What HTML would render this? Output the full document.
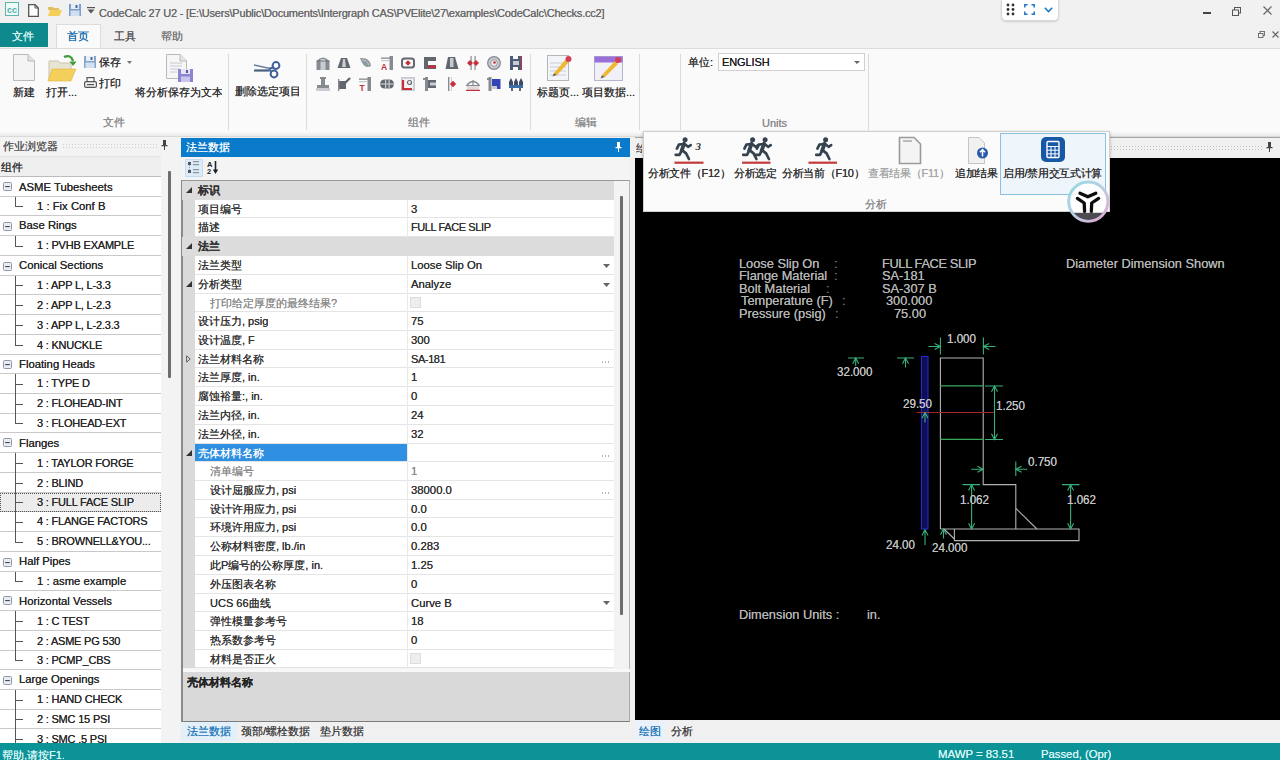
<!DOCTYPE html>
<html lang="zh"><head><meta charset="utf-8"><title>CodeCalc 27 U2</title>
<style>
*{box-sizing:border-box;margin:0;padding:0}
html,body{width:1280px;height:760px;overflow:hidden;background:#f0f0f0}
body{font-family:"Liberation Sans",sans-serif;font-size:11px;color:#333;position:relative}
.a{position:absolute;white-space:nowrap}
.t{position:absolute;white-space:nowrap;line-height:14px;height:14px;text-shadow:0 0 .6px}
svg{position:absolute;overflow:visible}
#title{left:0;top:0;width:1280px;height:24px;background:#f1f1f1}
#tabs{left:0;top:23px;width:1280px;height:25px;background:#f0f0f0}
#ribbon{left:0;top:48px;width:1280px;height:88px;background:linear-gradient(#fafafa 0,#fafafa 83px,#e4e4e4 88px);border-top:1px solid #dcdcdc}
.sep{position:absolute;width:1px;background:#dadada;top:54px;height:76px}
.glabel{color:#8a8a8a;font-size:11px}
#status{left:0;top:743px;width:1280px;height:17px;background:#0c9397;color:#fff}
.row{position:absolute;left:0;width:161px;height:20px;background:#fff;border-bottom:1px solid #c9c9c9}
.grow{position:absolute;left:195px;width:419px;height:19px;background:#fff;border-bottom:1px solid #e4e4e4}
.gcat{position:absolute;left:182px;width:432px;height:19px;background:#dcdcdc}
</style></head><body>
<!-- title bar -->
<div class="a" id="title"></div>
<div class="t" style="left:99px;top:6px;font-size:11px;color:#6a6a6a;letter-spacing:-0.2px">CodeCalc 27 U2 - [E:\Users\Public\Documents\Intergraph CAS\PVElite\27\examples\CodeCalc\Checks.cc2]</div>
<!-- tabs row -->
<div class="a" id="tabs"></div>
<div class="a" style="left:0;top:23px;width:48px;height:24px;background:#0e8a8c"></div>
<div class="t" style="left:12px;top:29px;color:#d8f4f4;font-size:11px;width:24px;overflow:hidden">文件</div>
<div class="a" style="left:56px;top:24px;width:45px;height:25px;background:#fafafa;border:1px solid #dcdcdc;border-bottom:none"></div>
<div class="t" style="left:67px;top:29px;color:#1a6fb0;font-size:11px;width:24px;overflow:hidden">首页</div>
<div class="t" style="left:114px;top:29px;color:#555;font-size:11px;width:24px;overflow:hidden">工具</div>
<div class="t" style="left:161px;top:29px;color:#777;font-size:11px;width:24px;overflow:hidden">帮助</div>
<!-- ribbon -->
<div class="a" id="ribbon"></div>
<div class="sep" style="left:228px"></div><div class="sep" style="left:306px"></div><div class="sep" style="left:530px"></div><div class="sep" style="left:639px"></div><div class="sep" style="left:680px"></div><div class="sep" style="left:868px"></div>
<!-- quick access icons -->
<svg style="left:5px;top:2px" width="14" height="14" viewBox="0 0 14 14"><rect x=".5" y=".5" width="13" height="13" fill="#eefaf8" stroke="#5bb5ad"/><text x="7" y="10.5" font-size="9" font-family="Liberation Sans" font-weight="bold" fill="#52b0a8" text-anchor="middle">cc</text></svg>
<svg style="left:28px;top:4px" width="11" height="13" viewBox="0 0 11 13"><path d="M.7.7H7L10.3 4V12.3H.7Z" fill="#fdfdfd" stroke="#555" stroke-width="1.3"/><path d="M7 .7V4H10.3" fill="none" stroke="#555"/></svg>
<svg style="left:48px;top:6px" width="14" height="10" viewBox="0 0 14 10"><path d="M0 1H5L6 2H11V4H0Z" fill="#e0c060"/><path d="M2 4H14L11.5 10H0Z" fill="#f3cf57"/></svg>
<svg style="left:69px;top:4px" width="12" height="12" viewBox="0 0 12 12"><rect width="12" height="12" fill="#7d9fc8"/><rect x="2" y="0" width="8" height="5" fill="#e6edf5"/><rect x="6.5" y="1" width="2" height="3" fill="#4a6a9c"/><rect x="1.5" y="6.5" width="9" height="5.5" fill="#cfdff0"/></svg>
<svg style="left:87px;top:7px" width="8" height="7" viewBox="0 0 8 7"><rect x="0" y="0" width="8" height="1.2" fill="#555"/><path d="M.5 2.5H7.5L4 6.5Z" fill="#555"/></svg>
<!-- File group -->
<svg style="left:13px;top:54px" width="22" height="27" viewBox="0 0 22 27"><path d="M.5.5H15L21.5 7V26.5H.5Z" fill="#f4f4f4" stroke="#b9b9b9"/><path d="M15 .5V7H21.5" fill="#e2e2e2" stroke="#b9b9b9"/></svg>
<div class="t" style="left:13px;top:85px;width:22px;overflow:hidden;color:#333">新建</div>
<svg style="left:47px;top:53px" width="30" height="29" viewBox="0 0 30 29"><path d="M2 8H11L13 10H24V27H2Z" fill="#e8e4d4" stroke="#c9c3a8"/><path d="M5 16H29L24 28H1Z" fill="#f4cf5c" stroke="#e0b840" stroke-width=".6"/><path d="M17 4Q24 1 26 8" fill="none" stroke="#3e9a3a" stroke-width="2.4"/><path d="M22.5 8.5H29.5L26 13Z" fill="#3e9a3a"/></svg>
<div class="t" style="left:46px;top:85px;width:31px;overflow:hidden;color:#333">打开...</div>
<svg style="left:84px;top:56px" width="12" height="12" viewBox="0 0 12 12"><rect width="12" height="12" fill="#86a6cc"/><rect x="2" y="0" width="8" height="5" fill="#e8eff6"/><rect x="6.5" y="1" width="2" height="3" fill="#4a6a9c"/><rect x="1.5" y="6.5" width="9" height="5.5" fill="#d3e2f1"/></svg>
<div class="t" style="left:99px;top:55px;width:22px;overflow:hidden;color:#333">保存</div>
<svg style="left:127px;top:61px" width="5" height="3" viewBox="0 0 5 3"><path d="M0 0H5L2.5 3Z" fill="#777"/></svg>
<svg style="left:84px;top:77px" width="13" height="11" viewBox="0 0 13 11"><rect x="3" y=".6" width="7" height="4" fill="#fff" stroke="#555" stroke-width="1.2"/><rect x=".6" y="4.6" width="11.8" height="5.8" rx="1.5" fill="#f1f1f1" stroke="#555" stroke-width="1.2"/><rect x="3" y="7" width="7" height="1.2" fill="#555"/></svg>
<div class="t" style="left:99px;top:76px;width:22px;overflow:hidden;color:#333">打印</div>
<svg style="left:166px;top:54px" width="28" height="29" viewBox="0 0 28 29"><path d="M.5.5H14L20.5 7V24.5H.5Z" fill="#f6f6f6" stroke="#b9b9b9"/><path d="M14 .5V7H20.5" fill="#e4e4e4" stroke="#b9b9b9"/><path d="M4 9H16M4 12H16M4 15H13M4 18H11" stroke="#c4c9d2" stroke-width="1.2"/><rect x="12" y="15" width="15" height="13" fill="#8c86d0"/><rect x="15" y="15" width="9" height="5" fill="#e6e4f6"/><rect x="20" y="16" width="2" height="3" fill="#5b55a8"/><rect x="15" y="22.5" width="9" height="5.5" fill="#c9c6ec"/></svg>
<div class="t" style="left:135px;top:85px;width:87px;overflow:hidden;color:#333">将分析保存为文本</div>
<div class="t glabel" style="left:103px;top:115px;width:22px;overflow:hidden">文件</div>
<!-- delete -->
<svg style="left:253px;top:60px" width="30" height="20" viewBox="0 0 30 20"><path d="M1 5L17 8.5" stroke="#6b7f9c" stroke-width="1.6"/><path d="M1 10.5H16" stroke="#4a5f80" stroke-width="2.2"/><circle cx="23" cy="5.5" r="3.4" fill="none" stroke="#3f5f96" stroke-width="2"/><circle cx="21" cy="14" r="3.4" fill="none" stroke="#3f5f96" stroke-width="2"/><path d="M16 9L20 7.5M16 10L18.5 11.5" stroke="#3f5f96" stroke-width="2"/></svg>
<div class="t" style="left:235px;top:84px;width:64px;overflow:hidden;color:#333">删除选定项目</div>
<svg style="left:316px;top:56px" width="14" height="14" viewBox="0 0 14 14"><path d="M.5 5 Q7 -2 13.5 5 V14 H.5Z" fill="#868a91"/><rect x="4.5" y="3" width="5" height="11" fill="#c8cbd1"/><path d="M.5 5H13.5" stroke="#62666e" stroke-width=".8"/></svg><svg style="left:316px;top:77px" width="14" height="14" viewBox="0 0 14 14"><path d="M4 0H10V2H9V8H13V13H1V8H5V2H4Z" fill="#868a91"/><rect x="0" y="11" width="14" height="3" fill="#c8cbd1"/></svg>
<svg style="left:337px;top:56px" width="14" height="14" viewBox="0 0 14 14"><path d="M4 2 H10 L13.5 12 H.5Z" fill="#62666e"/><path d="M6 3H8L9 11H5Z" fill="#c8cbd1"/></svg><svg style="left:337px;top:77px" width="14" height="14" viewBox="0 0 14 14"><rect x="2" y="4" width="7" height="8" fill="#62666e"/><path d="M7 7L13 1" stroke="#62666e" stroke-width="2.4"/><rect x="1" y="2" width="1.4" height="12" fill="#868a91"/></svg>
<svg style="left:358px;top:56px" width="14" height="14" viewBox="0 0 14 14"><path d="M2 2 Q12 1 13 10 Q6 14 2 2Z" fill="#8d9aa0"/><path d="M4 4Q9 4 11 9" stroke="#c8cbd1" fill="none"/></svg><svg style="left:358px;top:77px" width="14" height="14" viewBox="0 0 14 14"><rect x="9.500" y="0" width="3.500" height="14" fill="#868a91"/><rect x="1" y="1.500" width="9" height="1.300" fill="#868a91"/><rect x="1" y="4" width="9" height="1.300" fill="#c8cbd1"/><text x="1.500" y="13.500" font-family="Liberation Sans" font-weight="bold" font-size="8.500" fill="#c5303a">T</text></svg>
<svg style="left:380px;top:56px" width="14" height="14" viewBox="0 0 14 14"><rect x="9.5" y="0" width="3.5" height="14" fill="#868a91"/><rect x="1" y="1.5" width="9" height="1.3" fill="#868a91"/><rect x="1" y="4" width="9" height="1.3" fill="#c8cbd1"/><text x="1" y="13.5" font-family="Liberation Sans" font-weight="bold" font-size="8.5" fill="#c5303a">A</text></svg><svg style="left:380px;top:77px" width="14" height="14" viewBox="0 0 14 14"><rect x="0" y="2.5" width="14" height="9" rx="4.5" fill="#62666e"/><rect x="5" y="2.5" width="1.2" height="9" fill="#c8cbd1"/><rect x="8.5" y="2.5" width="1.2" height="9" fill="#c8cbd1"/><rect x="0" y="6.4" width="14" height="1.2" fill="#c8cbd1"/></svg>
<svg style="left:401px;top:56px" width="14" height="14" viewBox="0 0 14 14"><rect x="1" y="2.5" width="12" height="9" rx="2.5" fill="none" stroke="#62666e" stroke-width="2"/><path d="M7 4.200L9.800 7L7 9.800L4.200 7Z" fill="#c5303a"/></svg><svg style="left:401px;top:77px" width="14" height="14" viewBox="0 0 14 14"><rect x="0" y="0" width="14" height="14" fill="#c8cbd1"/><rect x="1.8" y="1.8" width="10.4" height="10.4" fill="#f3f3f3"/><path d="M2 3V12H11" stroke="#c5303a" stroke-width="2.2" fill="none"/><circle cx="8.5" cy="5.5" r="2" fill="none" stroke="#62666e" stroke-width="1.2"/></svg>
<svg style="left:423px;top:56px" width="14" height="14" viewBox="0 0 14 14"><path d="M1 1H13V5H5V9H13V13H1Z" fill="#62666e"/><rect x="5" y="9.5" width="8" height="2.5" fill="#c5303a"/></svg><svg style="left:423px;top:77px" width="14" height="14" viewBox="0 0 14 14"><rect x="2" y="0" width="3" height="14" fill="#868a91"/><rect x="5" y="3" width="8" height="8" fill="#62666e"/><rect x="0" y="1" width="3" height="2" fill="#868a91"/><rect x="7" y="5.5" width="6" height="3" fill="#c8cbd1"/></svg>
<svg style="left:445px;top:56px" width="14" height="14" viewBox="0 0 14 14"><path d="M3 1H10L13.5 13H.5Z" fill="#62666e"/><rect x="5" y="2" width="3.5" height="9" fill="#c8cbd1"/></svg><svg style="left:445px;top:77px" width="14" height="14" viewBox="0 0 14 14"><rect x="3" y="0" width="1.4" height="14" fill="#868a91"/><rect x="6" y="0" width="1" height="14" fill="#c8cbd1"/><path d="M8 3.800L11.200 7L8 10.200L4.800 7Z" fill="#c5303a"/></svg>
<svg style="left:466px;top:56px" width="14" height="14" viewBox="0 0 14 14"><rect x="4.5" y="0" width="1.2" height="14" fill="#868a91"/><rect x="8.5" y="0" width="1.2" height="14" fill="#868a91"/><path d="M4 4L7 7L4 10L1 7Z" fill="#c5303a"/><path d="M10 4L13 7L10 10L7 7Z" fill="#c5303a"/></svg><svg style="left:466px;top:77px" width="14" height="14" viewBox="0 0 14 14"><path d="M1 8Q7 1 13 8" fill="none" stroke="#868a91" stroke-width="1.3"/><rect x="0" y="8" width="14" height="1.2" fill="#868a91"/><rect x="1" y="9.5" width="12" height="3.5" fill="#e2d9d9"/><rect x="0" y="12.8" width="14" height="1.2" fill="#c5303a"/><rect x="6.4" y="3" width="1.2" height="6" fill="#868a91"/></svg>
<svg style="left:487px;top:56px" width="14" height="14" viewBox="0 0 14 14"><circle cx="7" cy="7" r="6.3" fill="#c8cbd1" stroke="#868a91" stroke-width="1.3"/><circle cx="7" cy="7" r="3.4" fill="#e9e9ec" stroke="#868a91" stroke-width=".8"/><circle cx="7.5" cy="6.5" r="1.3" fill="#c5303a"/></svg><svg style="left:487px;top:77px" width="14" height="14" viewBox="0 0 14 14"><rect x="1.5" y="0" width="3" height="14" fill="#868a91"/><rect x="5" y="2" width="8.5" height="10" fill="#3344b4"/><rect x="0" y="1" width="3" height="2" fill="#868a91"/><rect x="5" y="9" width="5" height="3" fill="#c8cbd1"/></svg>
<svg style="left:509px;top:56px" width="14" height="14" viewBox="0 0 14 14"><path d="M1 0H4V3H9V0H13V14H9V11H4V14H1Z" fill="#4d5a78"/><rect x="4" y="5" width="6" height="4" fill="#c8cbd1"/><rect x="11" y="0" width="1" height="14" fill="#c5303a"/></svg><svg style="left:509px;top:77px" width="14" height="14" viewBox="0 0 14 14"><path d="M2 1L4 5V9H0V5Z M7 1L9 5V9H5V5Z M12 1L14 5V9H10V5Z" fill="#3c4a63"/><rect x="0" y="8" width="14" height="3" fill="#3b6ea5"/><rect x="2" y="11" width="2" height="3" fill="#62666e"/><rect x="10" y="11" width="2" height="3" fill="#62666e"/></svg>
<div class="t glabel" style="left:408px;top:115px;width:22px;overflow:hidden">组件</div>
<!-- edit group -->
<svg style="left:546px;top:54px" width="27" height="28" viewBox="0 0 27 28"><rect x="1.5" y="1.5" width="21" height="25" fill="#f3f4f7" stroke="#b4b6bd"/><path d="M4 9H20M4 13H20M4 17H20M4 21H20" stroke="#c9ccd6" stroke-width="1"/><path d="M8 19L20 5L23 8L11 21Z" fill="#f0b830"/><path d="M8 19L11 21L6.5 22.5Z" fill="#7a6a50"/><circle cx="22.5" cy="5" r="3" fill="#d0405a"/></svg>
<div class="t" style="left:537px;top:85px;width:44px;overflow:hidden;color:#333">标题页...</div>
<svg style="left:594px;top:55px" width="30" height="27" viewBox="0 0 30 27"><rect x=".5" y="1.5" width="28" height="24" fill="#f0f0f6" stroke="#b4b6cd"/><rect x=".5" y="1.5" width="28" height="6" fill="#9a6fd8"/><path d="M8 20L21 6L24 9L11 22Z" fill="#f0b830"/><path d="M8 20L11 22L6.5 23.5Z" fill="#7a6a50"/><circle cx="24" cy="5" r="3" fill="#d0405a"/></svg>
<div class="t" style="left:582px;top:85px;width:54px;overflow:hidden;color:#333">项目数据...</div>
<div class="t glabel" style="left:575px;top:115px;width:22px;overflow:hidden">编辑</div>
<!-- units -->
<div class="t" style="left:688px;top:55px;width:25px;overflow:hidden;color:#333">单位:</div>
<div class="a" style="left:718px;top:53px;width:147px;height:18px;background:#fff;border:1px solid #d0d0d0"></div>
<div class="t" style="left:722px;top:55px;color:#222;letter-spacing:-0.1px">ENGLISH</div>
<svg style="left:854px;top:61px" width="6" height="3" viewBox="0 0 6 3"><path d="M0 0H6L3 3Z" fill="#666"/></svg>
<div class="t glabel" style="left:762px;top:116px">Units</div>
<!-- window controls -->
<div class="a" style="left:1001px;top:0;width:58px;height:21px;background:#fff;border:1px solid #d9d9d9;border-top:none;border-radius:0 0 5px 5px;box-shadow:0 1px 2px rgba(0,0,0,.15)"></div>
<svg style="left:1006px;top:3px" width="9" height="13" viewBox="0 0 9 13"><g fill="#333"><circle cx="2" cy="2" r="1.4"/><circle cx="7" cy="2" r="1.4"/><circle cx="2" cy="6.5" r="1.4"/><circle cx="7" cy="6.5" r="1.4"/><circle cx="2" cy="11" r="1.4"/><circle cx="7" cy="11" r="1.4"/></g></svg>
<svg style="left:1024px;top:4px" width="11" height="11" viewBox="0 0 11 11"><path d="M.8 3.5V.8H3.5M7.5.8H10.2V3.5M10.2 7.5V10.2H7.5M3.5 10.2H.8V7.5" fill="none" stroke="#1e78c8" stroke-width="1.5"/></svg>
<svg style="left:1044px;top:7px" width="9" height="6" viewBox="0 0 9 6"><path d="M.8.8L4.5 4.6L8.2.8" fill="none" stroke="#1e78c8" stroke-width="1.5"/></svg>
<div class="a" style="left:1203px;top:12px;width:8px;height:2px;background:#444"></div>
<svg style="left:1232px;top:7px" width="9" height="9" viewBox="0 0 9 9"><rect x="2.5" y=".5" width="6" height="5.5" fill="none" stroke="#555"/><rect x=".5" y="3" width="6" height="5.5" fill="#f1f1f1" stroke="#555"/></svg>
<svg style="left:1263px;top:6px" width="9" height="9" viewBox="0 0 9 9"><path d="M.5.5L8.5 8.5M8.5.5L.5 8.5" stroke="#666" stroke-width="1.2"/></svg>
<svg style="left:1258px;top:31px" width="7" height="7" viewBox="0 0 7 7"><rect x="2" y=".5" width="4.5" height="4" fill="none" stroke="#666" stroke-width=".9"/><rect x=".5" y="2.5" width="4.5" height="4" fill="#f0f0f0" stroke="#666" stroke-width=".9"/></svg>
<svg style="left:1272px;top:31px" width="7" height="7" viewBox="0 0 7 7"><path d="M.5.5L6.5 6.5M6.5.5L.5 6.5" stroke="#666" stroke-width="1.1"/></svg>
<!-- left panel -->
<div class="a" style="left:0;top:137px;width:180px;height:607px;background:#f3f3f3"></div>
<div class="a" style="left:0;top:136px;width:1280px;height:1px;background:#dadada"></div>
<div class="t" style="left:3px;top:139px;color:#555;width:56px;overflow:hidden">作业浏览器</div>
<div class="a" style="left:62px;top:143px;width:96px;height:5px;opacity:.5;background-image:radial-gradient(#aaa 0.6px,transparent 0.8px);background-size:3px 3px"></div>
<svg style="left:161px;top:140px" width="7" height="10" viewBox="0 0 7 10"><path d="M2 0H5V5H6.5V6.2H4V10H3V6.2H.5V5H2Z" fill="#444"/></svg>
<div class="a" style="left:0;top:156px;width:161px;height:21px;background:#efefef;border-bottom:1px solid #bdbdbd;border-top:1px solid #e3e3e3"></div>
<div class="t" style="left:1px;top:160px;color:#333;width:22px;overflow:hidden">组件</div>
<div class="a" style="left:168px;top:171px;width:3px;height:207px;background:#6d6d6d;border-radius:1px"></div>
<div class="row" style="top:177px;height:20px"></div><svg style="left:3px;top:182px" width="9" height="9" viewBox="0 0 9 9"><rect x=".5" y=".5" width="8" height="8" rx="1" fill="#e9edf3" stroke="#8e98a8"/><rect x="2.2" y="4" width="4.6" height="1.1" fill="#445"/></svg><div class="t" style="left:19px;top:180px;color:#2a2a2a;font-size:11.3px">ASME Tubesheets</div>
<div class="row" style="top:197px;height:19px"></div><div class="a" style="left:15px;top:197px;width:1px;height:10px;background:#555"></div><div class="a" style="left:15px;top:206px;width:8px;height:1px;background:#555"></div><div class="t" style="left:37px;top:199px;color:#2a2a2a;font-size:11.3px">1 : Fix Conf B</div>
<div class="row" style="top:216px;height:20px"></div><svg style="left:3px;top:222px" width="9" height="9" viewBox="0 0 9 9"><rect x=".5" y=".5" width="8" height="8" rx="1" fill="#e9edf3" stroke="#8e98a8"/><rect x="2.2" y="4" width="4.6" height="1.1" fill="#445"/></svg><div class="t" style="left:19px;top:218px;color:#2a2a2a;font-size:11.3px">Base Rings</div>
<div class="row" style="top:236px;height:20px"></div><div class="a" style="left:15px;top:236px;width:1px;height:11px;background:#555"></div><div class="a" style="left:15px;top:246px;width:8px;height:1px;background:#555"></div><div class="t" style="left:37px;top:238px;color:#2a2a2a;letter-spacing:-0.2px">1 : PVHB EXAMPLE</div>
<div class="row" style="top:256px;height:20px"></div><svg style="left:3px;top:262px" width="9" height="9" viewBox="0 0 9 9"><rect x=".5" y=".5" width="8" height="8" rx="1" fill="#e9edf3" stroke="#8e98a8"/><rect x="2.2" y="4" width="4.6" height="1.1" fill="#445"/></svg><div class="t" style="left:19px;top:258px;color:#2a2a2a;font-size:11.3px">Conical Sections</div>
<div class="row" style="top:276px;height:19px"></div><div class="a" style="left:15px;top:276px;width:1px;height:19px;background:#555"></div><div class="a" style="left:15px;top:285px;width:8px;height:1px;background:#555"></div><div class="t" style="left:37px;top:278px;color:#2a2a2a;letter-spacing:-0.2px">1 : APP L, L-3.3</div>
<div class="row" style="top:295px;height:20px"></div><div class="a" style="left:15px;top:295px;width:1px;height:20px;background:#555"></div><div class="a" style="left:15px;top:305px;width:8px;height:1px;background:#555"></div><div class="t" style="left:37px;top:298px;color:#2a2a2a;letter-spacing:-0.2px">2 : APP L, L-2.3</div>
<div class="row" style="top:315px;height:20px"></div><div class="a" style="left:15px;top:315px;width:1px;height:20px;background:#555"></div><div class="a" style="left:15px;top:325px;width:8px;height:1px;background:#555"></div><div class="t" style="left:37px;top:318px;color:#2a2a2a;letter-spacing:-0.2px">3 : APP L, L-2.3.3</div>
<div class="row" style="top:335px;height:20px"></div><div class="a" style="left:15px;top:335px;width:1px;height:11px;background:#555"></div><div class="a" style="left:15px;top:345px;width:8px;height:1px;background:#555"></div><div class="t" style="left:37px;top:338px;color:#2a2a2a;letter-spacing:-0.2px">4 : KNUCKLE</div>
<div class="row" style="top:355px;height:19px"></div><svg style="left:3px;top:360px" width="9" height="9" viewBox="0 0 9 9"><rect x=".5" y=".5" width="8" height="8" rx="1" fill="#e9edf3" stroke="#8e98a8"/><rect x="2.2" y="4" width="4.6" height="1.1" fill="#445"/></svg><div class="t" style="left:19px;top:357px;color:#2a2a2a;font-size:11.3px">Floating Heads</div>
<div class="row" style="top:374px;height:20px"></div><div class="a" style="left:15px;top:374px;width:1px;height:20px;background:#555"></div><div class="a" style="left:15px;top:384px;width:8px;height:1px;background:#555"></div><div class="t" style="left:37px;top:376px;color:#2a2a2a;letter-spacing:-0.2px">1 : TYPE D</div>
<div class="row" style="top:394px;height:20px"></div><div class="a" style="left:15px;top:394px;width:1px;height:20px;background:#555"></div><div class="a" style="left:15px;top:404px;width:8px;height:1px;background:#555"></div><div class="t" style="left:37px;top:396px;color:#2a2a2a;letter-spacing:-0.2px">2 : FLOHEAD-INT</div>
<div class="row" style="top:414px;height:19px"></div><div class="a" style="left:15px;top:414px;width:1px;height:10px;background:#555"></div><div class="a" style="left:15px;top:423px;width:8px;height:1px;background:#555"></div><div class="t" style="left:37px;top:416px;color:#2a2a2a;letter-spacing:-0.2px">3 : FLOHEAD-EXT</div>
<div class="row" style="top:433px;height:20px"></div><svg style="left:3px;top:438px" width="9" height="9" viewBox="0 0 9 9"><rect x=".5" y=".5" width="8" height="8" rx="1" fill="#e9edf3" stroke="#8e98a8"/><rect x="2.2" y="4" width="4.6" height="1.1" fill="#445"/></svg><div class="t" style="left:19px;top:436px;color:#2a2a2a;font-size:11.3px">Flanges</div>
<div class="row" style="top:453px;height:20px"></div><div class="a" style="left:15px;top:453px;width:1px;height:20px;background:#555"></div><div class="a" style="left:15px;top:463px;width:8px;height:1px;background:#555"></div><div class="t" style="left:37px;top:456px;color:#2a2a2a;letter-spacing:-0.2px">1 : TAYLOR FORGE</div>
<div class="row" style="top:473px;height:20px"></div><div class="a" style="left:15px;top:473px;width:1px;height:20px;background:#555"></div><div class="a" style="left:15px;top:483px;width:8px;height:1px;background:#555"></div><div class="t" style="left:37px;top:476px;color:#2a2a2a;letter-spacing:-0.2px">2 : BLIND</div>
<div class="row" style="top:493px;height:19px;background:#ececec;outline:1px dotted #555;outline-offset:-1px"></div><div class="a" style="left:15px;top:493px;width:1px;height:19px;background:#555"></div><div class="a" style="left:15px;top:502px;width:8px;height:1px;background:#555"></div><div class="t" style="left:37px;top:495px;color:#2a2a2a;letter-spacing:-0.2px">3 : FULL FACE SLIP</div>
<div class="row" style="top:512px;height:20px"></div><div class="a" style="left:15px;top:512px;width:1px;height:20px;background:#555"></div><div class="a" style="left:15px;top:522px;width:8px;height:1px;background:#555"></div><div class="t" style="left:37px;top:514px;color:#2a2a2a;letter-spacing:-0.2px">4 : FLANGE FACTORS</div>
<div class="row" style="top:532px;height:20px"></div><div class="a" style="left:15px;top:532px;width:1px;height:11px;background:#555"></div><div class="a" style="left:15px;top:542px;width:8px;height:1px;background:#555"></div><div class="t" style="left:37px;top:534px;color:#2a2a2a;letter-spacing:-0.2px">5 : BROWNELL&amp;YOU...</div>
<div class="row" style="top:552px;height:20px"></div><svg style="left:3px;top:558px" width="9" height="9" viewBox="0 0 9 9"><rect x=".5" y=".5" width="8" height="8" rx="1" fill="#e9edf3" stroke="#8e98a8"/><rect x="2.2" y="4" width="4.6" height="1.1" fill="#445"/></svg><div class="t" style="left:19px;top:554px;color:#2a2a2a;font-size:11.3px">Half Pipes</div>
<div class="row" style="top:572px;height:19px"></div><div class="a" style="left:15px;top:572px;width:1px;height:10px;background:#555"></div><div class="a" style="left:15px;top:581px;width:8px;height:1px;background:#555"></div><div class="t" style="left:37px;top:574px;color:#2a2a2a;font-size:11.3px">1 : asme example</div>
<div class="row" style="top:591px;height:20px"></div><svg style="left:3px;top:596px" width="9" height="9" viewBox="0 0 9 9"><rect x=".5" y=".5" width="8" height="8" rx="1" fill="#e9edf3" stroke="#8e98a8"/><rect x="2.2" y="4" width="4.6" height="1.1" fill="#445"/></svg><div class="t" style="left:19px;top:594px;color:#2a2a2a;font-size:11.3px">Horizontal Vessels</div>
<div class="row" style="top:611px;height:20px"></div><div class="a" style="left:15px;top:611px;width:1px;height:20px;background:#555"></div><div class="a" style="left:15px;top:621px;width:8px;height:1px;background:#555"></div><div class="t" style="left:37px;top:614px;color:#2a2a2a;letter-spacing:-0.2px">1 : C TEST</div>
<div class="row" style="top:631px;height:20px"></div><div class="a" style="left:15px;top:631px;width:1px;height:20px;background:#555"></div><div class="a" style="left:15px;top:641px;width:8px;height:1px;background:#555"></div><div class="t" style="left:37px;top:634px;color:#2a2a2a;letter-spacing:-0.2px">2 : ASME PG 530</div>
<div class="row" style="top:651px;height:19px"></div><div class="a" style="left:15px;top:651px;width:1px;height:10px;background:#555"></div><div class="a" style="left:15px;top:660px;width:8px;height:1px;background:#555"></div><div class="t" style="left:37px;top:653px;color:#2a2a2a;letter-spacing:-0.2px">3 : PCMP_CBS</div>
<div class="row" style="top:670px;height:20px"></div><svg style="left:3px;top:676px" width="9" height="9" viewBox="0 0 9 9"><rect x=".5" y=".5" width="8" height="8" rx="1" fill="#e9edf3" stroke="#8e98a8"/><rect x="2.2" y="4" width="4.6" height="1.1" fill="#445"/></svg><div class="t" style="left:19px;top:672px;color:#2a2a2a;font-size:11.3px">Large Openings</div>
<div class="row" style="top:690px;height:20px"></div><div class="a" style="left:15px;top:690px;width:1px;height:20px;background:#555"></div><div class="a" style="left:15px;top:700px;width:8px;height:1px;background:#555"></div><div class="t" style="left:37px;top:692px;color:#2a2a2a;letter-spacing:-0.2px">1 : HAND CHECK</div>
<div class="row" style="top:710px;height:19px"></div><div class="a" style="left:15px;top:710px;width:1px;height:19px;background:#555"></div><div class="a" style="left:15px;top:719px;width:8px;height:1px;background:#555"></div><div class="t" style="left:37px;top:712px;color:#2a2a2a;letter-spacing:-0.2px">2 : SMC 15 PSI</div>
<div class="row" style="top:729px;height:20px"></div><div class="a" style="left:15px;top:729px;width:1px;height:20px;background:#555"></div><div class="a" style="left:15px;top:739px;width:8px;height:1px;background:#555"></div><div class="t" style="left:37px;top:732px;color:#2a2a2a;letter-spacing:-0.2px">3 : SMC .5 PSI</div>
<!-- middle panel -->
<div class="a" style="left:180px;top:137px;width:451px;height:607px;background:#f0f0f0"></div>
<div class="a" style="left:181px;top:138px;width:449px;height:19px;background:#0a7acb"></div>
<div class="t" style="left:186px;top:140px;color:#fff;width:44px;overflow:hidden">法兰数据</div>
<svg style="left:615px;top:142px" width="7" height="10" viewBox="0 0 7 10"><path d="M2 0H5V5H6.5V6.2H4V10H3V6.2H.5V5H2Z" fill="#fff"/></svg>
<div class="a" style="left:181px;top:157px;width:449px;height:23px;background:#f4f4f4"></div>
<div class="a" style="left:185px;top:159px;width:18px;height:18px;background:#dcebf7;border:1px solid #c3dcef"></div>
<svg style="left:188px;top:161px" width="12" height="13" viewBox="0 0 12 13"><g fill="#556"><rect x="0" y="1" width="3" height="3"/><rect x="0" y="9" width="3" height="3"/></g><g fill="#8a93a0"><rect x="5" y="0" width="6" height="1.2"/><rect x="5" y="3" width="6" height="1.2"/><rect x="5" y="8" width="6" height="1.2"/><rect x="5" y="11" width="6" height="1.2"/></g><path d="M1.5 4V9" stroke="#99a" stroke-dasharray="1 1"/></svg>
<svg style="left:207px;top:160px" width="12" height="15" viewBox="0 0 12 15"><text x="0" y="6.5" font-family="Liberation Sans" font-size="7.5" font-weight="bold" fill="#222">A</text><text x="0" y="14" font-family="Liberation Sans" font-size="7.5" font-weight="bold" fill="#222">2</text><path d="M8.5 1V12" stroke="#222" stroke-width="1.6"/><path d="M5.8 9.5H11.2L8.5 14Z" fill="#222"/></svg>
<!-- grid frame -->
<div class="a" style="left:181px;top:180px;width:2px;height:542px;background:#8a8a8a"></div>
<div class="a" style="left:183px;top:180px;width:447px;height:489px;background:#f3f3f3;border-top:1px solid #9a9a9a;border-right:1px solid #b5b5b5"></div>
<div class="a" style="left:183px;top:181px;width:12px;height:487px;background:#dadada"></div>
<div class="a" style="left:620px;top:196px;width:3px;height:419px;background:#6d6d6d;border-radius:1px"></div>
<div class="gcat" style="top:181px;height:19px"></div><svg style="left:186px;top:187px" width="6" height="6" viewBox="0 0 6 6"><path d="M6 0V6H0Z" fill="#333"/></svg><div class="t" style="left:198px;top:183px;font-weight:bold;color:#333">标识</div>
<div class="grow" style="top:200px;height:18px"></div><div class="a" style="left:407px;top:200px;width:1px;height:18px;background:#e9e9e9"></div><div class="t" style="left:198px;top:202px;color:#333;max-width:209px;overflow:hidden">项目编号</div><div class="t" style="left:411px;top:202px;color:#333;font-size:11.3px">3</div>
<div class="grow" style="top:218px;height:19px"></div><div class="a" style="left:407px;top:218px;width:1px;height:19px;background:#e9e9e9"></div><div class="t" style="left:198px;top:220px;color:#333;max-width:209px;overflow:hidden">描述</div><div class="t" style="left:411px;top:220px;color:#333;letter-spacing:-0.4px">FULL FACE SLIP</div>
<div class="gcat" style="top:237px;height:19px"></div><svg style="left:186px;top:243px" width="6" height="6" viewBox="0 0 6 6"><path d="M6 0V6H0Z" fill="#333"/></svg><div class="t" style="left:198px;top:239px;font-weight:bold;color:#333">法兰</div>
<div class="grow" style="top:256px;height:19px"></div><div class="a" style="left:407px;top:256px;width:1px;height:19px;background:#e9e9e9"></div><div class="t" style="left:198px;top:258px;color:#333;max-width:209px;overflow:hidden">法兰类型</div><div class="t" style="left:411px;top:258px;color:#333;font-size:11.3px">Loose Slip On</div><svg style="left:603px;top:264px" width="7" height="4" viewBox="0 0 7 4"><path d="M0 0H7L3.5 4Z" fill="#666"/></svg>
<div class="grow" style="top:275px;height:19px"></div><div class="a" style="left:407px;top:275px;width:1px;height:19px;background:#e9e9e9"></div><svg style="left:186px;top:281px" width="6" height="6" viewBox="0 0 6 6"><path d="M6 0V6H0Z" fill="#333"/></svg><div class="t" style="left:198px;top:277px;color:#333;max-width:209px;overflow:hidden">分析类型</div><div class="t" style="left:411px;top:277px;color:#333;font-size:11.3px">Analyze</div><svg style="left:603px;top:283px" width="7" height="4" viewBox="0 0 7 4"><path d="M0 0H7L3.5 4Z" fill="#666"/></svg>
<div class="grow" style="top:294px;height:18px"></div><div class="a" style="left:407px;top:294px;width:1px;height:18px;background:#e9e9e9"></div><div class="t" style="left:210px;top:296px;color:#8a8a8a;max-width:197px;overflow:hidden">打印给定厚度的最终结果?</div><div class="a" style="left:410px;top:297px;width:11px;height:11px;background:#eeeeee;border:1px solid #dddddd"></div>
<div class="grow" style="top:312px;height:19px"></div><div class="a" style="left:407px;top:312px;width:1px;height:19px;background:#e9e9e9"></div><div class="t" style="left:198px;top:314px;color:#333;max-width:209px;overflow:hidden">设计压力, psig</div><div class="t" style="left:411px;top:314px;color:#333;font-size:11.3px">75</div>
<div class="grow" style="top:331px;height:19px"></div><div class="a" style="left:407px;top:331px;width:1px;height:19px;background:#e9e9e9"></div><div class="t" style="left:198px;top:333px;color:#333;max-width:209px;overflow:hidden">设计温度, F</div><div class="t" style="left:411px;top:333px;color:#333;font-size:11.3px">300</div>
<div class="grow" style="top:350px;height:18px"></div><div class="a" style="left:407px;top:350px;width:1px;height:18px;background:#e9e9e9"></div><svg style="left:186px;top:355px" width="5" height="8" viewBox="0 0 5 8"><path d="M.6.8L4.2 4L.6 7.2Z" fill="none" stroke="#555" stroke-width=".9"/></svg><div class="t" style="left:198px;top:352px;color:#333;max-width:209px;overflow:hidden">法兰材料名称</div><div class="t" style="left:411px;top:352px;color:#333;letter-spacing:-0.4px">SA-181</div><div class="a" style="left:601px;top:361px;width:9px;height:2px;background-image:radial-gradient(#999 .7px,transparent .9px);background-size:3px 2px"></div>
<div class="grow" style="top:368px;height:19px"></div><div class="a" style="left:407px;top:368px;width:1px;height:19px;background:#e9e9e9"></div><div class="t" style="left:198px;top:370px;color:#333;max-width:209px;overflow:hidden">法兰厚度, in.</div><div class="t" style="left:411px;top:370px;color:#333;font-size:11.3px">1</div>
<div class="grow" style="top:387px;height:19px"></div><div class="a" style="left:407px;top:387px;width:1px;height:19px;background:#e9e9e9"></div><div class="t" style="left:198px;top:389px;color:#333;max-width:209px;overflow:hidden">腐蚀裕量:, in.</div><div class="t" style="left:411px;top:389px;color:#333;font-size:11.3px">0</div>
<div class="grow" style="top:406px;height:19px"></div><div class="a" style="left:407px;top:406px;width:1px;height:19px;background:#e9e9e9"></div><div class="t" style="left:198px;top:408px;color:#333;max-width:209px;overflow:hidden">法兰内径, in.</div><div class="t" style="left:411px;top:408px;color:#333;font-size:11.3px">24</div>
<div class="grow" style="top:425px;height:19px"></div><div class="a" style="left:407px;top:425px;width:1px;height:19px;background:#e9e9e9"></div><div class="t" style="left:198px;top:427px;color:#333;max-width:209px;overflow:hidden">法兰外径, in.</div><div class="t" style="left:411px;top:427px;color:#333;font-size:11.3px">32</div>
<div class="grow" style="top:444px;height:18px"></div><div class="a" style="left:407px;top:444px;width:1px;height:18px;background:#e9e9e9"></div><div class="a" style="left:195px;top:444px;width:212px;height:17px;background:#2f8fe0"></div><svg style="left:186px;top:450px" width="6" height="6" viewBox="0 0 6 6"><path d="M6 0V6H0Z" fill="#333"/></svg><div class="t" style="left:198px;top:446px;color:#fff;max-width:209px;overflow:hidden">壳体材料名称</div><div class="a" style="left:601px;top:455px;width:9px;height:2px;background-image:radial-gradient(#999 .7px,transparent .9px);background-size:3px 2px"></div>
<div class="grow" style="top:462px;height:19px"></div><div class="a" style="left:407px;top:462px;width:1px;height:19px;background:#e9e9e9"></div><div class="t" style="left:210px;top:464px;color:#8a8a8a;max-width:197px;overflow:hidden">清单编号</div><div class="t" style="left:411px;top:464px;color:#8a8a8a;font-size:11.3px">1</div>
<div class="grow" style="top:481px;height:19px"></div><div class="a" style="left:407px;top:481px;width:1px;height:19px;background:#e9e9e9"></div><div class="t" style="left:210px;top:483px;color:#333;max-width:197px;overflow:hidden">设计屈服应力, psi</div><div class="t" style="left:411px;top:483px;color:#333;font-size:11.3px">38000.0</div><div class="a" style="left:601px;top:492px;width:9px;height:2px;background-image:radial-gradient(#999 .7px,transparent .9px);background-size:3px 2px"></div>
<div class="grow" style="top:500px;height:18px"></div><div class="a" style="left:407px;top:500px;width:1px;height:18px;background:#e9e9e9"></div><div class="t" style="left:210px;top:502px;color:#333;max-width:197px;overflow:hidden">设计许用应力, psi</div><div class="t" style="left:411px;top:502px;color:#333;font-size:11.3px">0.0</div>
<div class="grow" style="top:518px;height:19px"></div><div class="a" style="left:407px;top:518px;width:1px;height:19px;background:#e9e9e9"></div><div class="t" style="left:210px;top:520px;color:#333;max-width:197px;overflow:hidden">环境许用应力, psi</div><div class="t" style="left:411px;top:520px;color:#333;font-size:11.3px">0.0</div>
<div class="grow" style="top:537px;height:19px"></div><div class="a" style="left:407px;top:537px;width:1px;height:19px;background:#e9e9e9"></div><div class="t" style="left:210px;top:539px;color:#333;max-width:197px;overflow:hidden">公称材料密度, lb./in</div><div class="t" style="left:411px;top:539px;color:#333;font-size:11.3px">0.283</div>
<div class="grow" style="top:556px;height:19px"></div><div class="a" style="left:407px;top:556px;width:1px;height:19px;background:#e9e9e9"></div><div class="t" style="left:210px;top:558px;color:#333;max-width:197px;overflow:hidden">此P编号的公称厚度, in.</div><div class="t" style="left:411px;top:558px;color:#333;font-size:11.3px">1.25</div>
<div class="grow" style="top:575px;height:19px"></div><div class="a" style="left:407px;top:575px;width:1px;height:19px;background:#e9e9e9"></div><div class="t" style="left:210px;top:577px;color:#333;max-width:197px;overflow:hidden">外压图表名称</div><div class="t" style="left:411px;top:577px;color:#333;font-size:11.3px">0</div>
<div class="grow" style="top:594px;height:18px"></div><div class="a" style="left:407px;top:594px;width:1px;height:18px;background:#e9e9e9"></div><div class="t" style="left:210px;top:596px;color:#333;max-width:197px;overflow:hidden">UCS 66曲线</div><div class="t" style="left:411px;top:596px;color:#333;font-size:11.3px">Curve B</div><svg style="left:603px;top:601px" width="7" height="4" viewBox="0 0 7 4"><path d="M0 0H7L3.5 4Z" fill="#666"/></svg>
<div class="grow" style="top:612px;height:19px"></div><div class="a" style="left:407px;top:612px;width:1px;height:19px;background:#e9e9e9"></div><div class="t" style="left:210px;top:614px;color:#333;max-width:197px;overflow:hidden">弹性模量参考号</div><div class="t" style="left:411px;top:614px;color:#333;font-size:11.3px">18</div>
<div class="grow" style="top:631px;height:19px"></div><div class="a" style="left:407px;top:631px;width:1px;height:19px;background:#e9e9e9"></div><div class="t" style="left:210px;top:633px;color:#333;max-width:197px;overflow:hidden">热系数参考号</div><div class="t" style="left:411px;top:633px;color:#333;font-size:11.3px">0</div>
<div class="grow" style="top:650px;height:18px"></div><div class="a" style="left:407px;top:650px;width:1px;height:18px;background:#e9e9e9"></div><div class="t" style="left:210px;top:652px;color:#333;max-width:197px;overflow:hidden">材料是否正火</div><div class="a" style="left:410px;top:653px;width:11px;height:11px;background:#eeeeee;border:1px solid #dddddd"></div>
<div class="a" style="left:183px;top:669px;width:447px;height:3px;background:#f8f8f8"></div>
<div class="a" style="left:183px;top:672px;width:447px;height:50px;background:#d9d9d9;border-bottom:1px solid #7d7d7d;border-right:1px solid #a9a9a9"></div>
<div class="t" style="left:187px;top:675px;font-weight:bold;color:#222;width:66px;overflow:hidden">壳体材料名称</div>
<div class="a" style="left:181px;top:722px;width:56px;height:19px;background:#e3f0fa"></div>
<div class="t" style="left:187px;top:724px;color:#2a7ab8;width:44px;overflow:hidden">法兰数据</div>
<div class="t" style="left:241px;top:724px;color:#444;width:70px;overflow:hidden">颈部/螺栓数据</div>
<div class="t" style="left:320px;top:724px;color:#444;width:44px;overflow:hidden">垫片数据</div>
<!-- right panel -->
<div class="a" style="left:631px;top:137px;width:649px;height:607px;background:#f0f0f0"></div>
<div class="a" style="left:635px;top:137px;width:645px;height:1px;background:#a5a5a5"></div>
<div class="t" style="left:636px;top:141px;color:#555;width:6px;overflow:hidden">绘图</div>
<div class="a" style="left:1110px;top:145px;width:154px;height:6px;opacity:.55;background-image:radial-gradient(#999 0.6px,transparent 0.8px);background-size:3px 3px"></div>
<svg style="left:1266px;top:142px" width="7" height="10" viewBox="0 0 7 10"><path d="M2 0H5V5H6.5V6.2H4V10H3V6.2H.5V5H2Z" fill="#444"/></svg>
<div class="a" style="left:635px;top:158px;width:645px;height:562px;background:#000"></div>
<div class="a" style="left:635px;top:721px;width:30px;height:20px;background:#e9f2fa"></div>
<div class="t" style="left:639px;top:724px;color:#2a7ab8;width:22px;overflow:hidden">绘图</div>
<div class="t" style="left:671px;top:724px;color:#444;width:22px;overflow:hidden">分析</div>

<svg style="left:0;top:0" width="1280" height="760" viewBox="0 0 1280 760" fill="none"><rect x="921.5" y="356.5" width="6.5" height="172.5" fill="#0d0d58" stroke="#2828c4" stroke-width="1.1"/><g stroke="#b2b2b2" stroke-width="1.1"><path d="M940.4 529V358H983.2V484.6H1015.8V529"/><path d="M940.4 529H1079V540.6H954.4V529"/><path d="M1015.8 508.4L1036.9 529"/><path d="M944 529L954.4 539"/></g><path d="M940.4 385.8H983.4M940.4 439.4H983.4" stroke="#37a85a" stroke-width="1.2"/><path d="M916.5 412.5H994" stroke="#a02828" stroke-width="1.1"/><g stroke="#38b07a" stroke-width="1.1"><path d="M940.4 337.5V354.5M983.4 337.5V354.5"/><path d="M940.4 346.5H928.4M934.6 343.5L940.4 346.5L934.6 349.5"/><path d="M983.4 346.5H995.4M989.2 343.5L983.4 346.5L989.2 349.5"/><path d="M848 358H864M897 358H914"/><path d="M855.7 358.0V366.0M852.7 363.8L855.7 358.0L858.7 363.8"/><path d="M905.5 358.0V367.5M902.5 363.8L905.5 358.0L908.5 363.8"/><path d="M925.0 412.5V422.5M922.0 418.3L925.0 412.5L928.0 418.3"/><path d="M985 386H1003M985 439.5H1003M994.5 386V439.5"/><path d="M994.5 386.0V386.0M991.5 391.8L994.5 386.0L997.5 391.8"/><path d="M994.5 439.5V439.5M991.5 433.7L994.5 439.5L997.5 433.7"/><path d="M1015.8 461.5V476"/><path d="M983.2 469.2H971.2M977.4 466.2L983.2 469.2L977.4 472.2"/><path d="M1015.8 469.2H1027.3M1021.6 466.2L1015.8 469.2L1021.6 472.2"/><path d="M962.5 484.6H980M971.6 484.6V529"/><path d="M971.6 484.6V484.6M968.6 490.4L971.6 484.6L974.6 490.4"/><path d="M971.6 529.0V529.0M968.6 523.2L971.6 529.0L974.6 523.2"/><path d="M1062 484.6H1079.5M1070.6 484.6V529"/><path d="M1070.6 484.6V484.6M1067.6 490.4L1070.6 484.6L1073.6 490.4"/><path d="M1070.6 529.0V529.0M1067.6 523.2L1070.6 529.0L1073.6 523.2"/><path d="M925.0 529.6V545.1M922.0 535.4L925.0 529.6L928.0 535.4"/><path d="M943.5 529.0V538.5M940.5 534.8L943.5 529.0L946.5 534.8"/></g></svg>
<div class="t" style="left:739px;top:256.5px;font-size:12.8px;color:#b4b4b4;line-height:14px">Loose Slip On</div><div class="t" style="left:834px;top:256.5px;font-size:12.8px;color:#6a6a6a;line-height:14px">:</div><div class="t" style="left:739px;top:269.0px;font-size:12.8px;color:#b4b4b4;line-height:14px">Flange Material</div><div class="t" style="left:834px;top:269.0px;font-size:12.8px;color:#6a6a6a;line-height:14px">:</div><div class="t" style="left:739px;top:281.5px;font-size:12.8px;color:#b4b4b4;line-height:14px">Bolt Material</div><div class="t" style="left:826px;top:281.5px;font-size:12.8px;color:#6a6a6a;line-height:14px">:</div><div class="t" style="left:741px;top:294.0px;font-size:12.8px;color:#b4b4b4;line-height:14px">Temperature (F)</div><div class="t" style="left:842px;top:294.0px;font-size:12.8px;color:#6a6a6a;line-height:14px">:</div><div class="t" style="left:739px;top:306.5px;font-size:12.8px;color:#b4b4b4;line-height:14px">Pressure (psig)</div><div class="t" style="left:835px;top:306.5px;font-size:12.8px;color:#6a6a6a;line-height:14px">:</div><div class="t" style="left:882px;top:256.5px;font-size:12.8px;color:#b4b4b4;line-height:14px;letter-spacing:-0.35px">FULL FACE SLIP</div><div class="t" style="left:882px;top:269.0px;font-size:12.8px;color:#b4b4b4;line-height:14px">SA-181</div><div class="t" style="left:882px;top:281.5px;font-size:12.8px;color:#b4b4b4;line-height:14px">SA-307 B</div><div class="t" style="left:886px;top:294.0px;font-size:12.8px;color:#b4b4b4;line-height:14px">300.000</div><div class="t" style="left:894px;top:306.5px;font-size:12.8px;color:#b4b4b4;line-height:14px">75.00</div><div class="t" style="left:1066px;top:256.5px;font-size:12.8px;color:#b4b4b4;line-height:14px">Diameter Dimension Shown</div><div class="t" style="left:739px;top:608.0px;font-size:12.8px;color:#b4b4b4;line-height:14px">Dimension Units :</div><div class="t" style="left:867px;top:608.0px;font-size:12.8px;color:#b4b4b4;line-height:14px">in.</div><div class="t" style="left:947px;top:332.0px;font-size:12.6px;color:#c2c2c2;line-height:14px;transform:scaleX(.92);transform-origin:0 0">1.000</div><div class="t" style="left:837px;top:365.0px;font-size:12.6px;color:#c2c2c2;line-height:14px;transform:scaleX(.92);transform-origin:0 0">32.000</div><div class="t" style="left:903px;top:397.0px;font-size:12.6px;color:#c2c2c2;line-height:14px;transform:scaleX(.92);transform-origin:0 0">29.50</div><div class="t" style="left:996px;top:398.5px;font-size:12.6px;color:#c2c2c2;line-height:14px;transform:scaleX(.92);transform-origin:0 0">1.250</div><div class="t" style="left:1028px;top:454.5px;font-size:12.6px;color:#c2c2c2;line-height:14px;transform:scaleX(.92);transform-origin:0 0">0.750</div><div class="t" style="left:960px;top:492.5px;font-size:12.6px;color:#c2c2c2;line-height:14px;transform:scaleX(.92);transform-origin:0 0">1.062</div><div class="t" style="left:1067px;top:492.5px;font-size:12.6px;color:#c2c2c2;line-height:14px;transform:scaleX(.92);transform-origin:0 0">1.062</div><div class="t" style="left:886px;top:537.5px;font-size:12.6px;color:#c2c2c2;line-height:14px;transform:scaleX(.92);transform-origin:0 0">24.00</div><div class="t" style="left:932px;top:541.0px;font-size:12.6px;color:#c2c2c2;line-height:14px;transform:scaleX(.92);transform-origin:0 0">24.000</div>
<!-- analysis popup -->
<div class="a" style="left:643px;top:131px;width:467px;height:81px;background:#fbfbfb;border:1px solid #cfcfcf;box-shadow:0 1px 3px rgba(0,0,0,.25)"></div>
<div class="a" style="left:1000px;top:133px;width:106px;height:62px;background:#eef5fb;border:1px solid #8cc0de"></div>
<svg style="left:0;top:0" width="1280" height="760" viewBox="0 0 1280 760">
<g transform="translate(674.5 137.2)" stroke="#34434f" stroke-width="2.7" stroke-linecap="round" stroke-linejoin="round" fill="none"><circle cx="10.6" cy="2.6" r="2.5" fill="#34434f" stroke="none"/><path d="M9.6 6.6L7.2 13.2" stroke-width="3.8"/><path d="M9 6.8L4.4 7.4L2.4 11.4M10.4 7L13.6 9.6L16.2 8"/><path d="M7 13.4L5.2 17.6L1.2 17.6M7.8 13.2L11.6 16.2L14.4 21.8"/></g><text x="695.5" y="150" font-family="Liberation Serif" font-size="11" font-weight="bold" font-style="italic" fill="#333">3</text><rect x="674.5" y="161.6" width="29" height="2.2" fill="#c23b3b"/><g transform="translate(742.0 137.2)" stroke="#34434f" stroke-width="2.7" stroke-linecap="round" stroke-linejoin="round" fill="none"><circle cx="10.6" cy="2.6" r="2.5" fill="#34434f" stroke="none"/><path d="M9.6 6.6L7.2 13.2" stroke-width="3.8"/><path d="M9 6.8L4.4 7.4L2.4 11.4M10.4 7L13.6 9.6L16.2 8"/><path d="M7 13.4L5.2 17.6L1.2 17.6M7.8 13.2L11.6 16.2L14.4 21.8"/></g><g transform="translate(754.5 137.2)" stroke="#34434f" stroke-width="2.7" stroke-linecap="round" stroke-linejoin="round" fill="none"><circle cx="10.6" cy="2.6" r="2.5" fill="#34434f" stroke="none"/><path d="M9.6 6.6L7.2 13.2" stroke-width="3.8"/><path d="M9 6.8L4.4 7.4L2.4 11.4M10.4 7L13.6 9.6L16.2 8"/><path d="M7 13.4L5.2 17.6L1.2 17.6M7.8 13.2L11.6 16.2L14.4 21.8"/></g><rect x="742" y="161.6" width="28.5" height="2.2" fill="#c23b3b"/><g transform="translate(815.0 137.2)" stroke="#34434f" stroke-width="2.7" stroke-linecap="round" stroke-linejoin="round" fill="none"><circle cx="10.6" cy="2.6" r="2.5" fill="#34434f" stroke="none"/><path d="M9.6 6.6L7.2 13.2" stroke-width="3.8"/><path d="M9 6.8L4.4 7.4L2.4 11.4M10.4 7L13.6 9.6L16.2 8"/><path d="M7 13.4L5.2 17.6L1.2 17.6M7.8 13.2L11.6 16.2L14.4 21.8"/></g><rect x="808.5" y="161.6" width="28.5" height="2.2" fill="#c23b3b"/><path d="M899.500 137.500H914L920.500 144V163.500H899.500Z" fill="#f4f4f4" stroke="#9a9a9a" stroke-width="1.6"/><path d="M903 141H912" stroke="#aaa" stroke-width="1.5"/><path d="M968.500 137.500H979L984.500 143V163.500H968.500Z" fill="#f1f1f1" stroke="#c4c4c4"/><circle cx="982.500" cy="153" r="5.500" fill="#2d5aa8"/><path d="M982.500 156.500V150M980 152.200L982.500 149.500L985 152.200" stroke="#fff" stroke-width="1.5" fill="none"/><rect x="1041" y="137" width="24" height="25" rx="5" fill="#1759a6"/><rect x="1047" y="141.500" width="12" height="16" rx="1" fill="none" stroke="#fff" stroke-width="1.4"/><path d="M1047 146.500H1059M1047 150.200H1059M1047 153.900H1059M1051 146.500V157.500M1055 146.500V157.500" stroke="#fff" stroke-width="1"/><defs><linearGradient id="lg" x1="0" y1="0" x2="1" y2="1"><stop offset="0" stop-color="#8fdbe0"/><stop offset=".5" stop-color="#b9cfe4"/><stop offset="1" stop-color="#e6a6d0"/></linearGradient><clipPath id="cc"><circle cx="1088.300" cy="201.600" r="18.300"/></clipPath></defs>
<circle cx="1088.300" cy="201.600" r="19.600" fill="rgba(255,255,255,.85)" stroke="url(#lg)" stroke-width="3"/>
<rect x="1068" y="213" width="40" height="10" fill="#4e4a52" clip-path="url(#cc)"/>
<g stroke="#0c0c0c" stroke-width="3.300" fill="none" stroke-linecap="round" stroke-linejoin="round"><path d="M1080 193.200L1087.800 196.800L1095.800 193.200"/><path d="M1077.400 198.400L1084.200 203L1084.600 211.400"/><path d="M1098.600 198.400L1091.700 203L1091.300 211.400"/></g>
</svg>
<div class="t" style="left:648px;top:166px;width:80px;overflow:hidden;letter-spacing:-0.3px;color:#333">分析文件（F12）</div><div class="t" style="left:734px;top:166px;width:44px;overflow:hidden;letter-spacing:-0.3px;color:#333">分析选定</div><div class="t" style="left:782px;top:166px;width:80px;overflow:hidden;letter-spacing:-0.3px;color:#333">分析当前（F10）</div><div class="t" style="left:868px;top:166px;width:80px;overflow:hidden;letter-spacing:-0.3px;color:#a6a6a6">查看结果（F11）</div><div class="t" style="left:955px;top:166px;width:43px;overflow:hidden;letter-spacing:-0.3px;color:#333">追加结果</div><div class="t" style="left:1003px;top:166px;width:101px;overflow:hidden;letter-spacing:-0.3px;color:#333">启用/禁用交互式计算</div><div class="t glabel" style="left:865px;top:197px;width:22px;overflow:hidden">分析</div>
<!-- status bar -->
<div class="a" id="status"></div>
<div class="t" style="left:2px;top:748px;color:#d8f6f6;width:62px;overflow:hidden">帮助,请按F1.</div>
<div class="t" style="left:938px;top:747px;color:#d8f6f6;font-size:11.4px">MAWP = 83.51</div>
<div class="t" style="left:1041px;top:747px;color:#d8f6f6;font-size:11.3px">Passed, (Opr)</div>
</body></html>
